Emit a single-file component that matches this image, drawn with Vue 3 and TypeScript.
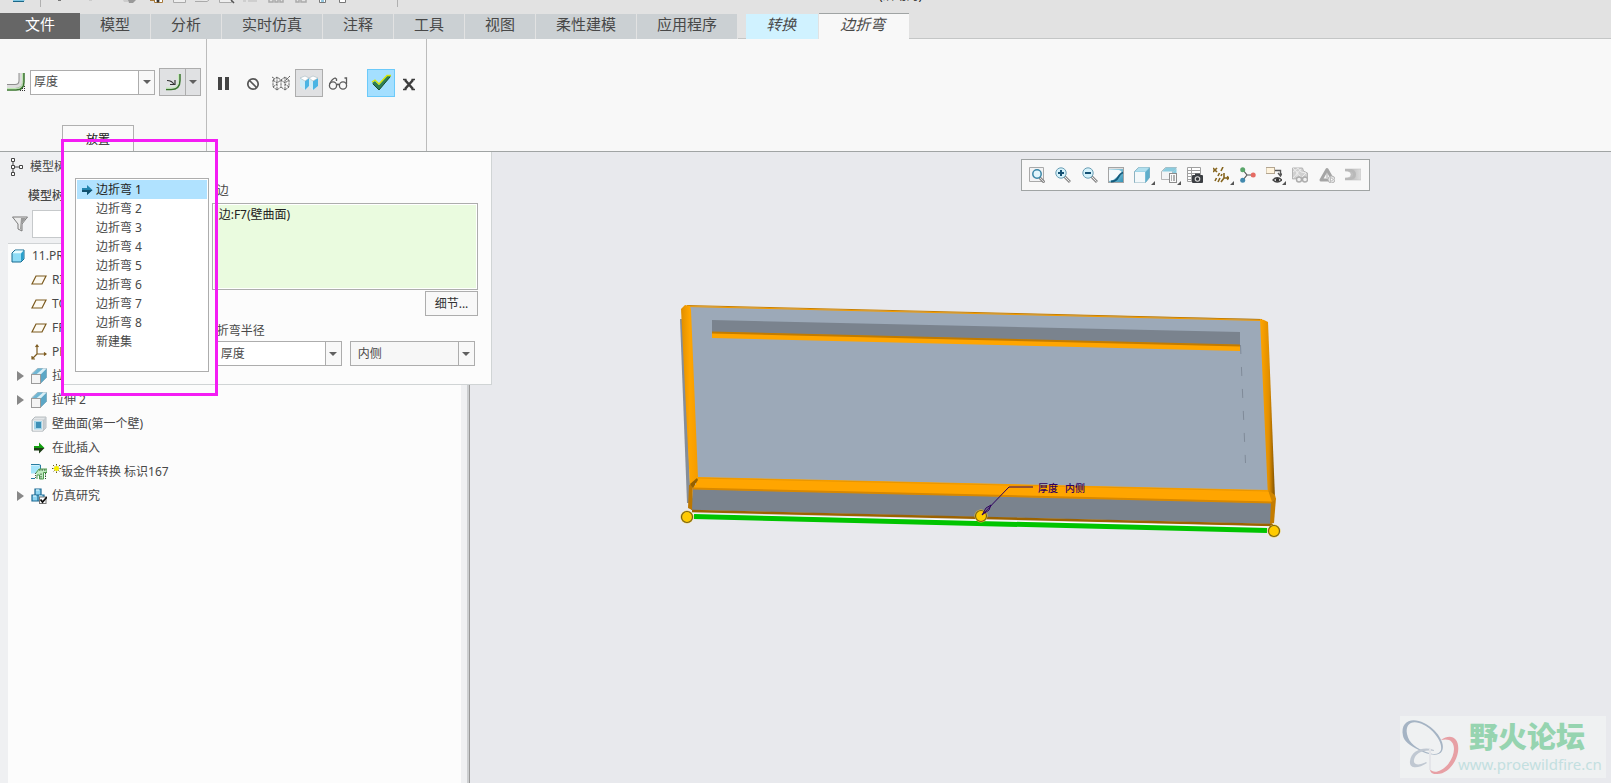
<script setup lang="ts">
import { ref } from 'vue'

interface TreeItem {
  label: string
  icon: string
  depth: number
  expandable?: boolean
  flagged?: boolean
}

const tabs: string[] = ['模型', '分析', '实时仿真', '注释', '工具', '视图', '柔性建模', '应用程序']

const bendSets: string[] = [
  '边折弯 1', '边折弯 2', '边折弯 3', '边折弯 4', '边折弯 5',
  '边折弯 6', '边折弯 7', '边折弯 8', '新建集',
]
const activeSet = ref(0)
const thickness = ref('厚度')
const radius = ref('厚度')
const side = ref('内侧')
const filterText = ref('')

const tree: TreeItem[] = [
  { label: '11.PRT', icon: 'part', depth: 0 },
  { label: 'RIGHT', icon: 'plane', depth: 1 },
  { label: 'TOP', icon: 'plane', depth: 1 },
  { label: 'FRONT', icon: 'plane', depth: 1 },
  { label: 'PRT', icon: 'csys', depth: 1 },
  { label: '拉伸 1', icon: 'extrude', depth: 1, expandable: true },
  { label: '拉伸 2', icon: 'extrude', depth: 1, expandable: true },
  { label: '壁曲面(第一个壁)', icon: 'wall', depth: 1 },
  { label: '在此插入', icon: 'insert', depth: 1 },
  { label: '钣金件转换 标识167', icon: 'convert', depth: 1, flagged: true },
  { label: '仿真研究', icon: 'study', depth: 1, expandable: true },
]

const viewTools = [
  { icon: 'fit', title: '重新调整' },
  { icon: 'zoomin', title: '放大' },
  { icon: 'zoomout', title: '缩小' },
  { icon: 'repaint', title: '重画' },
  { icon: 'style', title: '显示样式', menu: true },
  { icon: 'saved', title: '已保存方向', menu: true },
  { icon: 'viewmgr', title: '视图管理器' },
  { icon: 'datum', title: '基准显示过滤器', menu: true },
  { icon: 'spin', title: '旋转中心' },
  { icon: 'annot', title: '注释显示', menu: true },
  { icon: 'simview', title: '仿真显示' },
  { icon: 'simrun', title: '运行仿真' },
  { icon: 'simres', title: '仿真结果' },
]
</script>

<template>
  <div class="app">
    <svg class="defs" aria-hidden="true">
      <defs>
        <linearGradient id="g-orange" x1="0" y1="0" x2="1" y2="0">
          <stop offset="0" stop-color="#e08e00" /><stop offset=".5" stop-color="#ffa500" /><stop offset="1" stop-color="#f59c00" />
        </linearGradient>
        <linearGradient id="g-orange-r" x1="0" y1="0" x2="1" y2="0">
          <stop offset="0" stop-color="#ffa500" /><stop offset=".6" stop-color="#e28f00" /><stop offset="1" stop-color="#7d5000" />
        </linearGradient>
        <linearGradient id="g-pane" x1="0" y1="0" x2="1" y2="1">
          <stop offset="0" stop-color="#cfeaf3" /><stop offset="1" stop-color="#2d91b6" />
        </linearGradient>
        <linearGradient id="g-grey" x1="0" y1="0" x2="1" y2="0">
          <stop offset="0" stop-color="#a9a9a9" /><stop offset="1" stop-color="#dedede" />
        </linearGradient>
      </defs>
      <symbol id="i-part" viewBox="0 0 16 16">
        <path d="M2 5l3-3h9v9l-3 3H2z" fill="#8fdcf6" stroke="#176a90" />
        <path d="M2.5 5.2l2.8-2.7h8.2L11 5.2z" fill="#e9fbff" /><path d="M11 5.4l2.6-2.6v8L11 13.5z" fill="#2a9fcb" />
      </symbol>
      <symbol id="i-plane" viewBox="0 0 16 16"><path d="M5 4h10l-4 8H1z" fill="#fdfaf2" stroke="#7c5a1e" stroke-width="1.2" /></symbol>
      <symbol id="i-csys" viewBox="0 0 16 16">
        <path d="M6 1v9h9M6 10l-5 5M4.500 3L6 1l1.500 2M13 8.500L15 10l-2 1.500M1 12v3h3" fill="none" stroke="#7c5a1e" stroke-width="1.2" />
      </symbol>
      <symbol id="i-extrude" viewBox="0 0 16 16">
        <path d="M.5 6l6-5.500h9v9l-6 6z" fill="#a7d7ea" stroke="#9aa4a9" stroke-width=".7" />
        <path d="M9.500 6.500l6-6v9l-6 6z" fill="#5ca7c6" /><path d="M5 6.500l7-6h3.500l-6 6z" fill="#d9eff7" /><path d="M1 6.500l6-6h5l-7 6z" fill="#6fb6d3" />
        <rect x=".5" y="6.500" width="9" height="9" fill="#f4f4f4" stroke="#9b9b9b" />
      </symbol>
      <symbol id="i-wall" viewBox="0 0 16 16">
        <path d="M1 4l3-3h11v11l-3 3H1z" fill="#e3e6e8" stroke="#a6adb1" stroke-width=".8" />
        <path d="M12 4l3-3v11l-3 3z" fill="#c5cbcf" /><rect x="1.500" y="4" width="10.500" height="11" fill="#f6f7f8" stroke="#b3babd" stroke-width=".6" />
        <rect x="3" y="5" width="8" height="8.500" fill="#a4d5e8" /><rect x="5" y="6" width="5" height="6" fill="#3d90b7" />
      </symbol>
      <symbol id="i-insert" viewBox="0 0 16 16">
        <path d="M3 6h5V2.500l5.500 5.500H3z" fill="#13a010" /><path d="M3 8h10.500L8 13.500V10.500H3z" fill="#1d3d16" />
      </symbol>
      <symbol id="i-convert" viewBox="0 0 16 16">
        <path d="M0 1.500h10l-2 3v5H0z" fill="#a6e5fb" /><path d="M0 .5h8l2 1M9.500 1v4M0 14.500h4" fill="none" stroke="#287ca0" />
        <path d="M4.500 9v6" stroke="#555" stroke-dasharray="1 1" />
        <path d="M5 9l3-4h8v3.500h-3.500V15h-4v-4H6v4" fill="#c2ebc2" stroke="#4e9a4e" /><path d="M8 6h7M10 9.500V15M14.500 9v6" stroke="#2c552c" fill="none" stroke-dasharray="1.500 1" />
      </symbol>
      <symbol id="i-study" viewBox="0 0 16 16">
        <path d="M4 1h6v6H4zM1 7h6v6H1zM7 7h6v6H7z" fill="#8ed4f1" stroke="#186791" stroke-width="1.200" />
        <path d="M5 2h3M2 8h3M8 8h3" stroke="#e5f9ff" /><rect x="8.500" y="9" width="6.500" height="6.500" fill="#fff" stroke="#777" />
        <path d="M9.500 11.500l2 2.500L16 9" fill="none" stroke="#111" stroke-width="1.800" />
      </symbol>
      <symbol id="i-fit" viewBox="0 0 16 16">
        <path d="M.5 .5h14v14H.5z" fill="#f2f3f4" stroke="#a9a9a9" /><path d="M10.500 10.500l5 5" stroke="#8a8a8a" stroke-width="3" /><path d="M11 11l4 4" stroke="#d8d8d8" />
        <circle cx="8" cy="7" r="4.200" fill="#e3f6fc" stroke="#3b87a8" stroke-width="1.500" />
      </symbol>
      <symbol id="i-zoomin" viewBox="0 0 16 16">
        <path d="M9 9l6 6" stroke="#8b8b8b" stroke-width="3" /><path d="M9.500 9.500l5 5" stroke="#ececec" />
        <circle cx="6" cy="6" r="5.200" fill="#d5f2fb" stroke="#6a9db3" /><path d="M6 3v6M3 6h6" stroke="#155174" stroke-width="2" />
      </symbol>
      <symbol id="i-zoomout" viewBox="0 0 16 16">
        <path d="M9 9l6 6" stroke="#8b8b8b" stroke-width="3" /><path d="M9.500 9.500l5 5" stroke="#ececec" />
        <circle cx="6" cy="6" r="5.200" fill="#d5f2fb" stroke="#6a9db3" /><path d="M3 6h6" stroke="#155174" stroke-width="2" />
      </symbol>
      <symbol id="i-repaint" viewBox="0 0 16 16">
        <rect x=".5" y=".5" width="15" height="15" fill="url(#g-pane)" stroke="#a4a4a4" /><path d="M1 3h10q3 1 3 3L5 13l-4 1z" fill="#f6fafc" />
        <path d="M1 1.500h14" stroke="#dedede" /><path d="M3 14.500q5 0 7-4t5-5" fill="none" stroke="#135b7c" stroke-width="1.800" />
      </symbol>
      <symbol id="i-style" viewBox="0 0 16 16">
        <path d="M.5 4.500l4-4h11v10l-4 5H.5z" fill="#8ccbe1" stroke="#8db2c0" />
        <path d="M11.500 5l4-4v9.500l-4 5z" fill="#5eaecb" /><path d="M1 4.500l4-4h10l-3.500 4z" fill="#b1dfee" /><rect x="1" y="5" width="10" height="10.500" fill="#f3f8fa" />
      </symbol>
      <symbol id="i-saved" viewBox="0 0 16 16">
        <path d="M.5 4.500l4-4h11l-4 4v8H.5z" fill="#f3f4f5" stroke="#a6a6a6" stroke-width=".8" /><path d="M1 4.500l4-4h10.500l-4 4zM11.500 5l4-4v6h-4z" fill="#8accdf" />
        <rect x="8.500" y="6.500" width="7" height="9" fill="#fafafa" stroke="#8c8c8c" /><path d="M10 9h1M12 9h2M10 11h1M12 11h2M10 13h1M12 13h2" stroke="#666" />
      </symbol>
      <symbol id="i-viewmgr" viewBox="0 0 16 16">
        <path d="M.5 .5h13v14H.5zM.5 3.500h13M.5 6.500h13M.5 9.500h5M.5 12.500h5M4.500 .5v14" fill="#fff" stroke="#a0a0a0" />
        <rect x="5" y="8" width="11" height="8" rx="1" fill="#3b3e42" /><path d="M8 6.500h5v2H8z" fill="#3b3e42" />
        <circle cx="10.500" cy="12" r="2.800" fill="#ddd" /><circle cx="10.500" cy="12" r="1.700" fill="#34373a" />
      </symbol>
      <symbol id="i-datum" viewBox="0 0 16 16">
        <path d="M0 1l4 4M4 1L0 5M10 0L8 4M6.500 6L5 9M3.500 11L2 14M9 7l-1 2M7 11l-2 4M11 6v5h5M11 11l-3 4M14 9.500l2 1.500-2 1.500" fill="none" stroke="#86651f" stroke-width="1.600" />
      </symbol>
      <symbol id="i-spin" viewBox="0 0 16 16">
        <path d="M3 3l4 5-4 5M7 8h6" fill="none" stroke="#555" stroke-width="1.200" /><circle cx="2.700" cy="2.700" r="2.500" fill="#5aa66a" />
        <circle cx="13.200" cy="8" r="2.500" fill="#e56b63" /><circle cx="2.700" cy="13.300" r="2.500" fill="#4189ae" />
      </symbol>
      <symbol id="i-annot" viewBox="0 0 16 16">
        <rect x="0" y=".5" width="8.500" height="6" fill="#fff4de" stroke="#b3a590" /><path d="M9 3.500h5.500V8M12 6l2.500 3L16 6.500" fill="none" stroke="#555" stroke-width="1.400" />
        <path d="M7 13q4-4.500 9 0-5 4-9 0z" fill="#fff" stroke="#444" stroke-width="1.300" /><circle cx="11.500" cy="12.800" r="1.800" fill="#333" />
      </symbol>
      <symbol id="i-simview" viewBox="0 0 16 16">
        <path d="M.5 1h10l1 3 4 2v5l-15 1z" fill="#d0d0d0" stroke="#b4b4b4" /><path d="M1 5l5-4 3 4 5 1-4 4M1 1l8 9M5 4v6M1 11l8-9" stroke="#f2f2f2" stroke-width=".8" fill="none" />
        <circle cx="7" cy="12.500" r="2.500" fill="#f1f1f1" stroke="#adadad" stroke-width="1.400" /><circle cx="13" cy="12.500" r="2.500" fill="#f1f1f1" stroke="#adadad" stroke-width="1.400" />
      </symbol>
      <symbol id="i-simrun" viewBox="0 0 16 16">
        <path d="M8 2.500L14 13H2z" fill="#f5f5f5" stroke="#a5a5a5" stroke-width="3" stroke-linejoin="round" /><path d="M8 5v6" stroke="#aaa" stroke-width="1" /><circle cx="12.500" cy="12.500" r="3.500" fill="#e6e6e6" stroke="#b5b5b5" />
        <path d="M11.500 10.500v4l3-2z" fill="#fff" stroke="#999" stroke-width=".6" />
      </symbol>
      <symbol id="i-simres" viewBox="0 0 16 16">
        <path d="M0 2h16v11H0v-2q6 0 6-3.500T0 4z" fill="url(#g-grey)" stroke="#c4c4c4" stroke-width=".6" /><path d="M0 4h3q5 0 5 3.500T3 11H0v2h5q6-1 6-5.500T6 2H0z" fill="#b9b9b9" />
      </symbol>
      <symbol id="i-filter" viewBox="0 0 16 16">
        <path d="M.5 1h15L10 8v7l-4-2V8z" fill="#ececec" stroke="#7b7b7b" /><path d="M9 2h5L9.500 8v6L8 13z" fill="#9a9a9a" />
      </symbol>
      <symbol id="i-arrow" viewBox="0 0 12 12"><path d="M1 4h5V1l5.500 5L6 11V8H1z" fill="#2385ae" /><path d="M1 6h10.500L6 11V8H1z" fill="#12516f" /></symbol>
      <symbol id="i-treecfg" viewBox="0 0 14 20">
        <path d="M3 4v12M3 10h6" stroke="#444" /><path d="M1.500 1.500h3v3h-3zM1.500 8.500h3v3h-3zM1.500 15.500h3v3h-3zM9.500 8.500h3v3h-3z" fill="#fff" stroke="#444" />
      </symbol>
    </svg>

    <header class="quickbar">
      <svg class="quick-icons" width="400" height="7" viewBox="0 0 400 7" aria-hidden="true">
        <path d="M13 0h12l-2 2H13z" fill="#7cc6e2" /><path d="M13 1.500h11" stroke="#1c6787" />
        <path d="M40.500 0v7M397.500 0v7" stroke="#b0b0b0" /><path d="M58 .5h3" stroke="#777" /><path d="M89 .5h3" stroke="#ccc" />
        <path d="M123 0h5v2h-4z" fill="#ccc" /><path d="M128 0h8l-3 3h-4z" fill="#999" />
        <path d="M150 .5h5M154.500 0v2.500h8V0" fill="#fff" stroke="#a87a3a" /><circle cx="158" cy="1" r="1.500" fill="#333" />
        <path d="M173.500 0v2.500h12V0M195 1.500h12l2-1.500M219.500 0v2.500h12V0" fill="#eee" stroke="#aaa" /><path d="M231 0l3 3" stroke="#555" stroke-width="1.500" />
        <path d="M243 1h3M248 1h9" stroke="#bbb" /><path d="M269 0v2h4V0M275 0v2h3V0M280 0v2h3V0M296 0v2h3V0M301 0v2h5V0" fill="none" stroke="#aaa" stroke-width="1.500" />
        <path d="M319.500 0v2.500h6V0" fill="#fff" stroke="#777" /><path d="M321 1h3" stroke="#2a8fc0" /><path d="M339.500 0v2.500h6V0" fill="#fff" stroke="#777" />
      </svg>
      <span class="doc-title">(活动的)</span>
    </header>

    <nav class="tabs">
      <button class="tab file">文件</button>
      <button v-for="t in tabs" :key="t" class="tab">{{ t }}</button>
      <button class="tab context">转换</button>
      <button class="tab current">边折弯</button>
    </nav>

    <section class="ribbon">
      <div class="group dims">
        <div class="dims-row">
          <svg width="20" height="20" viewBox="0 0 20 20" aria-hidden="true">
            <path d="M1 14.500h8q6 0 6-6V1" fill="none" stroke="#8d8d8d" stroke-width="5" /><path d="M1 14.500h8q6 0 6-6V1" fill="none" stroke="#ddd" stroke-width="3" />
            <path d="M1 18h9q8 0 8-8V1" fill="none" stroke="#39752d" stroke-width="1.500" /><path d="M1 16.500h9q6.500 0 6.500-7V1" fill="none" stroke="#bde8b1" />
            <path d="M14 18.500h5M16 16.500h3M18.500 14v2" stroke="#333" stroke-dasharray="1 1" />
          </svg>
          <span class="combo">
            <select v-model="thickness" aria-label="厚度"><option>厚度</option></select>
            <span class="caret"></span>
          </span>
          <span class="split">
            <button title="折弯外侧">
              <svg width="18" height="20" viewBox="0 0 18 20"><path d="M2 17.500h5q9 0 9-9V2" fill="none" stroke="#39752d" stroke-width="1.500" /><path d="M2 16h5q7.500 0 7.500-7.500V2" fill="none" stroke="#c6ecba" /><path d="M3 8.500q5 0 7 4M6 12.500h5V8" fill="none" stroke="#333" stroke-width="1.200" /></svg>
            </button>
            <button class="more" title="更多"><i class="caret-glyph"></i></button>
          </span>
        </div>
        <button class="placement">放置</button>
      </div>
      <div class="group actions">
        <button title="暂停"><svg width="20" height="20" viewBox="0 0 20 20"><path d="M3 4h4v13H3zM10 4h4v13h-4z" fill="#444" /></svg></button>
        <button title="无预览"><svg width="20" height="20" viewBox="0 0 20 20"><circle cx="10" cy="11" r="5.200" fill="none" stroke="#555" stroke-width="1.700" /><path d="M6.500 7.500l7 7" stroke="#555" stroke-width="1.700" /></svg></button>
        <button title="分离"><svg width="20" height="20" viewBox="0 0 20 20"><path d="M2 7l4 3 4-3 4 3 4-3M2 7v7l4 3v-7M18 7v7l-4 3v-7M10 7v7l-4 3M10 14l4 3M2 7l4-3 4 3 4-3 4 3M6 4v6M14 4v6M2 14l4-3M18 14l-4-3M1 4l3 2M19 3l-5 5" fill="none" stroke="#555" stroke-width=".9" stroke-dasharray="2.500 .7" /></svg></button>
        <button class="on" title="连接"><svg width="20" height="20" viewBox="0 0 20 20"><path d="M1 5l5-2 4 2 4-2 5 2v8l-5 4-4-4-4 4-5-4z" fill="#e9f8fe" /><path d="M6 8l4-3v8l-4 4zM14 8l5-3v8l-5 4z" fill="#4bb4e3" /><path d="M1 5l5 3v9l-5-4zM10 5l4 3v9l-4-4z" fill="#cdebf6" /><path d="M1 5l5-2 4 2-4 3zM10 5l4-2 5 2-5 3z" fill="#fff" stroke="#a5b6bd" stroke-width=".6" /></svg></button>
        <button class="glasses" title="预览"><svg width="20" height="20" viewBox="0 0 20 20"><g fill="none" stroke="#5c5c5c" stroke-width="1.300"><circle cx="5" cy="12.500" r="3.600" /><circle cx="15" cy="12.500" r="3.600" /><path d="M8.500 12q1.500-1.500 3 0M1.500 11Q4 6 7 5l1.500 1v2M18.500 11V5h-2" /></g></svg></button>
        <button class="accept" title="确定"><svg width="22" height="20" viewBox="0 0 22 20"><path d="M2 10l3-2 4 4 8-9h4L9 17z" fill="#2f8053" /><path d="M2 9l3-2 4 4 8-8.500h4" fill="none" stroke="#d8e600" stroke-width="1.300" /><path d="M3 11l6 6L20 4" fill="none" stroke="#194b31" /></svg></button>
        <button title="取消"><svg width="20" height="20" viewBox="0 0 20 20"><path d="M4 6.500h3.500M12.500 6.500H16M4 16.500h3.500M12.500 16.500H16" stroke="#3d3d3d" stroke-width="1.500" /><path d="M6 7l8 9M14 7l-8 9" fill="none" stroke="#3d3d3d" stroke-width="2.600" /></svg></button>
      </div>
    </section>

    <main class="workspace">
      <aside class="navigator">
        <div class="nav-head"><svg width="14" height="20"><use href="#i-treecfg" /></svg><span>模型树</span></div>
        <h2>模型树</h2>
        <div class="filter">
          <svg width="16" height="16"><use href="#i-filter" /></svg>
          <input v-model="filterText" type="text" aria-label="过滤模型树" />
        </div>
        <ul class="tree">
          <li v-for="(item, i) in tree" :key="i" :class="{ root: item.depth === 0 }">
            <span class="twist" :class="{ open: item.expandable }"></span>
            <svg width="16" height="16"><use :href="'#i-' + item.icon" /></svg>
            <svg v-if="item.flagged" class="flag" width="9" height="16" viewBox="0 0 9 16"><path d="M1 1l7 7M8 1L1 8M4.500 0v9M0 4.500h9" stroke="#665e1a" stroke-width="1" stroke-dasharray="1.500 1" /><circle cx="4.500" cy="4.500" r="2.500" fill="#f8ef00" /></svg>
            <span class="name">{{ item.label }}</span>
          </li>
        </ul>
      </aside>

      <section class="viewport">
        <svg class="scene" viewBox="470 152 1141 631" preserveAspectRatio="xMinYMin meet" role="img" aria-label="钣金件模型">
          <path d="M680 319h3l7 165-1 19h-2z" fill="#858e9a" />
          <path d="M687 306l575 13 9 181-578-12z" fill="#9ca9b8" />
          <path d="M687 305.500l575 14" stroke="#c98000" />
          <path d="M687 306.500l575 14" stroke="#f39b00" />
          <path d="M712 320l528 12v14l-528-13z" fill="#7a838e" />
          <path d="M712 332l528 13v6l-528-13z" fill="#ffa500" />
          <path d="M712 332.500l528 13" stroke="#c27b00" stroke-width="2" />
          <path d="M1240.500 345l5 118" stroke="#808b99" stroke-dasharray="9 13" />
          <path d="M693 488l578 14 1 22-581-14z" fill="#7a838e" />
          <path d="M692 511l581 14" stroke="#9b6200" stroke-width="2.500" />
          <path d="M681 309l4-4 5 1 1 4 7 168-8 10z" fill="url(#g-orange)" />
          <path d="M1260 319l4 1 4 2 7 176-7 0z" fill="url(#g-orange-r)" />
          <path d="M697 477l571 13 5 8-1 5-579-14z" fill="#ffa500" />
          <path d="M693 488.500l579 14" stroke="#d88800" stroke-width="2" />
          <path d="M698 478l571 13" stroke="#e99600" />
          <path d="M689 485l4-1-1 26-4-2z" fill="#bd7700" />
          <path d="M690 484l7-6 1 2-5 8z" fill="#946000" /><path d="M695 483l1 1-1 1z" fill="#b8c4d0" />
          <path d="M1271 502l5-4-2 25-4 1z" fill="#c47c00" />
          <path d="M1268 490l7 5 1 4-4 3z" fill="#d18600" />
          <path d="M692 514l577 13" stroke="#fff" /><path d="M694 516.500l573 14" stroke="#00c400" stroke-width="5" />
          <g v-for="p in [[687, 517], [981, 516], [1274, 531]]" :key="p[0]">
            <circle :cx="p[0]" :cy="p[1]" r="6.500" fill="#f0cb40" /><circle :cx="p[0]" :cy="p[1]" r="5.500" fill="#ffcb00" stroke="#75611b" stroke-width="1.200" />
          </g>
          <path d="M982 515l27-28h24M982 515l4-7 5-3-2 5z" fill="none" stroke="#2f0060" />
          <text x="1038" y="492">厚度</text><text x="1065" y="492">内侧</text>
        </svg>

        <div class="view-tools">
          <button v-for="tool in viewTools" :key="tool.icon" :title="tool.title" :class="{ menu: tool.menu }">
            <svg width="16" height="16"><use :href="'#i-' + tool.icon" /></svg>
          </button>
        </div>

        <div class="brand">
          <svg width="60" height="62" viewBox="0 0 60 62" aria-hidden="true">
            <path fill-rule="evenodd" d="M3 20C0 5 12 1 24 7c13 6 22 21 18 28-3 6-14 4-23-1C9 29 4 25 3 20zm4-2c2 10 10 14 19 18 8 3 13 3 15-2 2-7-7-20-17-25C13 3 5 7 7 18z" fill="#a5b4c4" />
            <path fill-rule="evenodd" d="M10 45c1-10 13-15 24-11v1c-10-2-19 2-20 9-1 5 5 6 12 2l1 1c-9 6-18 6-17-2z" fill="#c0c8d2" />
            <path fill-rule="evenodd" d="M41 24c10-7 19-2 17 12-2 12-12 23-22 22-4 0-6-2-6-5 2 3 6 4 11 1 8-4 13-14 13-21 0-8-5-11-13-9z" fill="#e7a0a5" />
            <path d="M30 54V33" stroke="#e4e5e9" stroke-width="2" />
          </svg>
          <div class="brand-text"><strong>野火论坛</strong><span>www.proewildfire.cn</span></div>
        </div>
      </section>

      <section class="panel">
        <ul class="sets" role="listbox" aria-label="折弯集">
          <li v-for="(s, i) in bendSets" :key="s" role="option" :aria-selected="i === activeSet" :class="{ selected: i === activeSet }" @click="activeSet = i">
            <svg v-if="i === activeSet" width="12" height="12"><use href="#i-arrow" /></svg>{{ s }}
          </li>
        </ul>
        <div class="refs">
          <label for="edges">边</label>
          <textarea id="edges" readonly value="边:F7(壁曲面)"></textarea>
          <button class="details">细节...</button>
          <label for="radius">折弯半径</label>
          <div class="pair">
            <span class="combo"><select id="radius" v-model="radius"><option>厚度</option></select><span class="caret"></span></span>
            <span class="combo muted"><select v-model="side" aria-label="折弯侧"><option>内侧</option><option>外侧</option></select><span class="caret"></span></span>
          </div>
        </div>
      </section>
    </main>
    <div class="highlight"></div>
  </div>
</template>

<style>
html, body, #app { height: 100%; }
body { margin: 0; overflow: hidden; }
</style>

<style scoped>
.app {
  position: relative;
  display: flex;
  flex-direction: column;
  height: 100%;
  background: #e2e2e2;
  color: #484848;
  font: 12px/16px "Noto Sans", "Noto Sans CJK SC", sans-serif;
}
.app *, .app *::after { box-sizing: border-box; }
.defs { position: absolute; width: 0; height: 0; }
svg { display: block; flex: none; }
button, select, input, textarea { font: inherit; color: inherit; margin: 0; padding: 0; border: 0; border-radius: 0; outline: 0; background: none; }
ul { list-style: none; margin: 0; padding: 0; }

.quickbar { position: relative; height: 13px; overflow: hidden; flex: none; }
.doc-title { position: absolute; left: 879px; bottom: 9px; color: #222; }

.tabs { display: flex; height: 26px; flex: none; font-size: 15px; align-items: flex-end; background: linear-gradient(#c4c6c6, #c4c6c6) bottom / 100% 1px no-repeat; }
.tab { height: 25px; padding: 0 20px 4px; margin-right: 1px; background: #cbd0d3; line-height: 21px; box-shadow: 1px 0 #e2e2e2; }
.tab.file { height: 26px; width: 80px; margin: 0; background: #666; color: #fff; box-shadow: none; }
.tab.context { margin-left: 8px; padding: 0 22px 4px 20px; background: #d0f2ff; font-style: italic; }
.tab.current { height: 26px; padding: 0 24px 4px 21px; border-top: 1px solid #a0a4a4; background: #f8f8f8; font-style: italic; box-shadow: none; }

.ribbon { display: flex; flex: none; background: #f8f8f8; border-bottom: 1px solid #a0a4a4; height: 113px; }
.group { border-right: 1px solid #bcbcbc; }
.dims { width: 207px; padding-top: 29px; }
.dims-row { display: flex; align-items: center; height: 28px; padding-left: 6px; }
.dims-row .combo { margin: 0 4px; }
.combo { position: relative; display: flex; width: 125px; height: 25px; background: #fff; border: 1px solid #adadad; }
.combo select { appearance: none; width: 100%; padding: 0 20px 0 3px; }
.combo.muted { background: #f7f7f7; }
.combo.muted select { padding-left: 7px; }
.caret { position: absolute; right: 0; top: 0; width: 16px; height: 100%; border-left: 1px solid #adadad; background: #f8f8f8; pointer-events: none; display: grid; place-items: center; }
.caret::after, .caret-glyph { content: ""; border: 4px solid transparent; border-top-color: #606060; border-bottom: 0; width: 8px; height: 4px; }
.split { display: flex; width: 42px; height: 28px; background: #e0e1e3; border: 1px solid #adadad; }
.split button { flex: 1; display: grid; place-items: center; }
.split .more { flex: 0 0 15px; border-left: 1px solid #adadad; }
.placement { display: block; margin: 29px 0 0 62px; width: 72px; height: 26px; padding-top: 2px; border: 1px solid #b0b0b0; border-bottom: 0; color: #222; background: #fafafa; }
.actions { display: flex; padding: 30px 3px 0 4px; }
.actions button { width: 28px; height: 28px; display: grid; place-items: center; }
.actions .on { background: #e0e1e3; border: 1px solid #adadad; }
.actions .glasses { width: 30px; }
.actions .accept { margin-left: 14px; background: #a4dfff; border: 1px solid #6ccafa; }

.workspace { position: relative; display: flex; flex: 1; min-height: 0; }
.navigator { width: 470px; flex: none; padding: 0 8px 0 8px; background: #eff0f2; border-right: 1px solid #999; box-shadow: inset -2px 0 #ccced0; display: flex; flex-direction: column; }
.nav-head { display: flex; align-items: center; gap: 6px; height: 30px; padding-left: 2px; }
h2 { margin: 6px 0; margin-left: 20px; font-size: 12px; line-height: 16px; font-weight: 500; }
.filter { display: flex; align-items: center; gap: 4px; padding-left: 4px; }
.filter input { flex: 1; height: 28px; background: #fff; border: 1px solid #c6c9cb; }
.tree { flex: 1; margin-top: 5px; background: #fcfcfc; border-top: 1px solid #d0d3d5; }
.tree li { display: flex; align-items: center; height: 24px; padding-left: 8px; white-space: nowrap; }
.tree li.root { padding: 0 0 0 2px; }
.root .twist { display: none; }
.root .name { margin-left: 6px; }
.twist { width: 15px; height: 10px; flex: none; }
.twist.open::after { content: ""; display: block; width: 8px; height: 10px; margin-left: 1px; border: 5px solid transparent; border-left: 7px solid #888; border-right: 0; }
.name { margin-left: 5px; }
.flag { margin-left: 5px; }
.flag + .name { margin-left: 0; }

.viewport { position: relative; flex: 1; background: #e8e9ed; overflow: hidden; }
.scene { width: 100%; }
.scene text { font: 500 10px "Noto Sans CJK SC", sans-serif; fill: #2f0060; }
.view-tools { position: absolute; top: 7px; right: 241px; display: flex; width: 349px; height: 32px; padding: 0 3px 0 2px; background: #f8f8f8; border: 1px solid #a0a4a4; }
.view-tools button { position: relative; flex: 1; display: grid; place-items: center; }
.view-tools .menu::after { content: ""; position: absolute; right: 1px; bottom: 5px; border: 2px solid #555; border-top-color: transparent; border-left-color: transparent; }
.brand { position: absolute; right: 5px; bottom: 5px; display: flex; width: 206px; height: 62px; background: #eff1f2; white-space: nowrap; }
.brand-text { display: flex; flex-direction: column; }
.brand strong { margin-left: 9px; font: 900 29px/38px "Noto Sans CJK SC", sans-serif; color: #96d4b0; }
.brand span { margin-left: -2px; font-size: 15px; line-height: 20px; color: #c3dfe0; }

.panel { position: absolute; top: 0; left: 62px; display: flex; gap: 4px; width: 430px; padding: 26px 13px 12px; background: #fcfcfc; border: solid #d0d4d5; border-width: 0 1px 1px 0; }
.sets { width: 134px; height: 194px; padding: 1px; background: #fff; border: 1px solid #adadad; }
.sets li { position: relative; height: 19px; padding-left: 19px; line-height: 19px; }
.sets li.selected { background: #b0e2ff; color: #222; }
.sets svg { position: absolute; left: 4px; top: 4px; }
.refs { display: flex; flex-direction: column; width: 267px; padding-top: 5px; margin-left: -1px; }
.refs label { margin-left: 5px; }
.refs textarea { height: 87px; margin: 4px 0 1px; padding: 3px 6px; background: #eafbdf; border: 1px solid #adadad; box-shadow: inset 0 0 0 1px #fff; resize: none; color: #222; }
.details { align-self: flex-end; width: 53px; height: 25px; border: 1px solid #adadad; background: #f8f8f8; color: #333; margin-bottom: 7px; }
.pair { display: flex; gap: 8px; margin: 2px 0 0 5px; }
.highlight { position: absolute; left: 61px; top: 139px; width: 157px; height: 257px; border: 3px solid #f41cf4; pointer-events: none; }
</style>
